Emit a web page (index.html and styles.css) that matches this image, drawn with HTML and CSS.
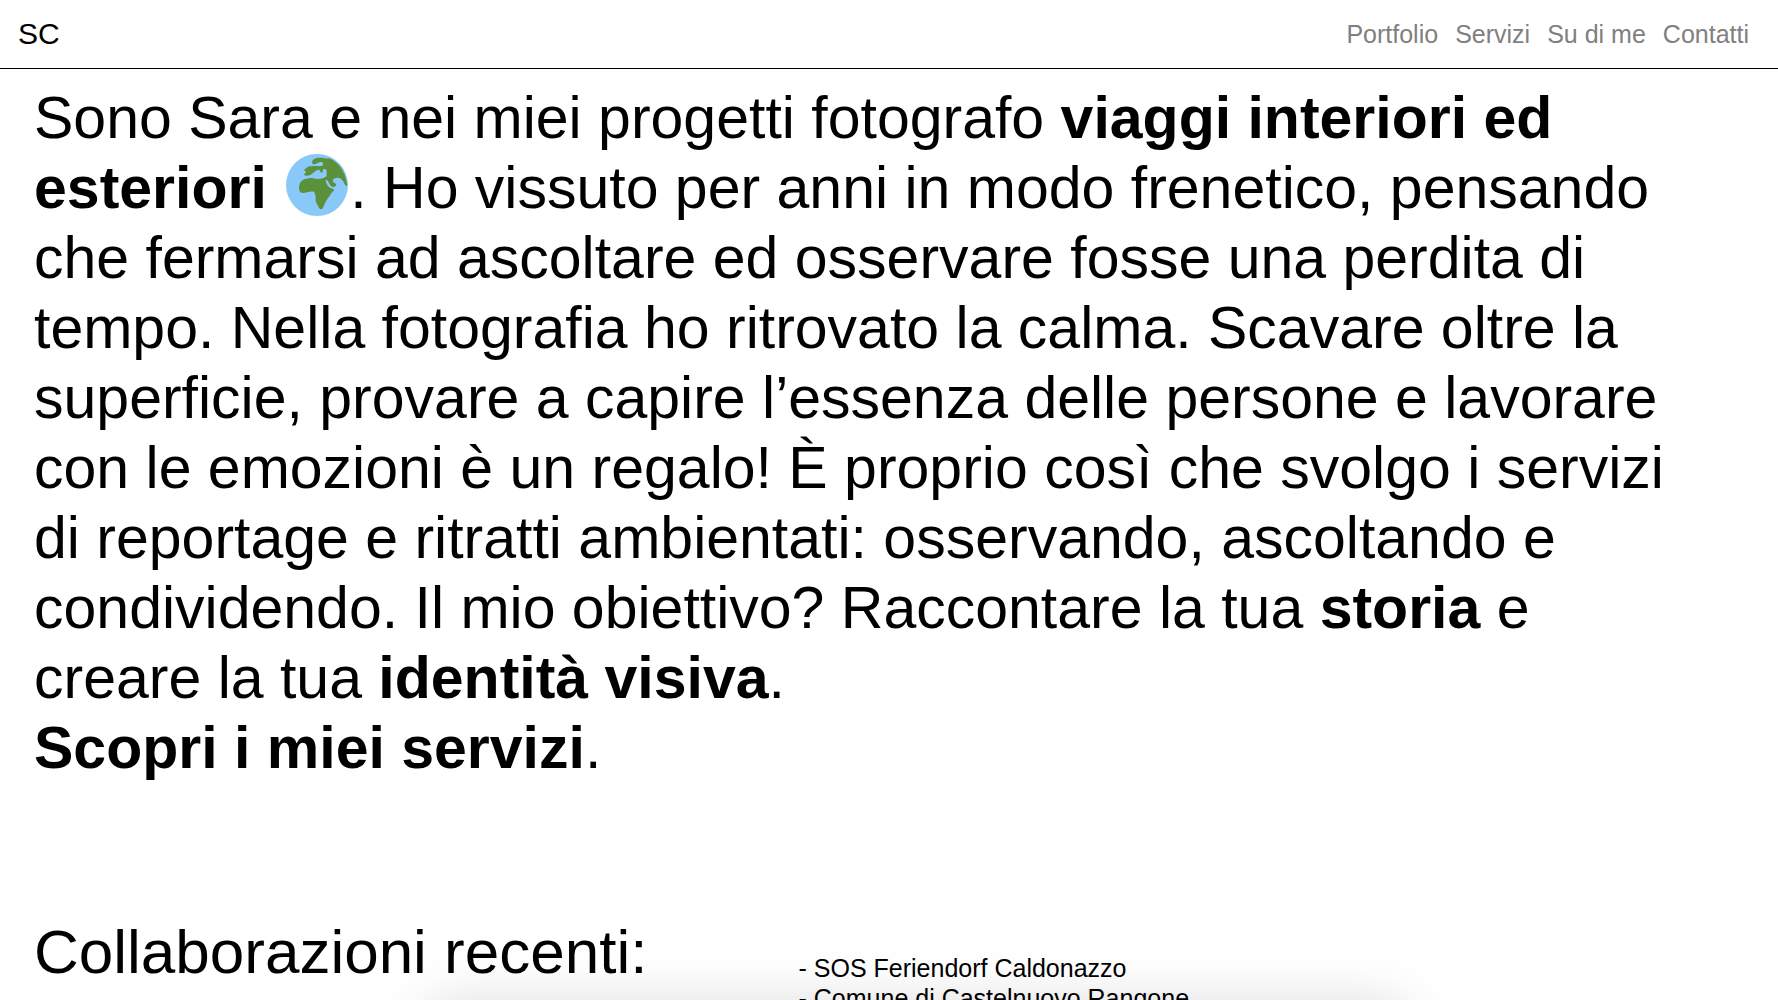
FILE: index.html
```
<!DOCTYPE html>
<html lang="it">
<head>
<meta charset="utf-8">
<title>SC</title>
<link rel="stylesheet" href="styles.css">
</head>
<body>
<header class="navbar">
  <a class="brand" href="#">SC</a>
  <nav class="menu">
    <a href="#portfolio">Portfolio</a>
    <a href="#servizi">Servizi</a>
    <a href="#su-di-me">Su di me</a>
    <a href="#contatti">Contatti</a>
  </nav>
</header>
<main class="content">
  <p class="intro">Sono Sara e nei miei progetti fotografo <b>viaggi interiori ed esteriori</b> <svg class="globe" viewBox="48 36 185 185" aria-hidden="true"><circle cx="140.500" cy="128.500" r="92.500" fill="#88c9f9"/><path fill="#5c913b" d="M126 62C125 54 134 47 146 47C158 46 169 50 177 49C204 60 225 86 231 128C230 133 226 132 222 124C218 112 208 106 201 107C193 108 186 111 188 118C194 124 201 125 197 131C191 136 185 135 180 129C175 120 173 114 167 112C165 120 172 130 179 137L191 141C192 146 184 151 180 158C171 169 163 184 158 197C154 203 149 202 146 196C142 187 136 180 136 171C139 163 134 157 132 149C121 145 111 151 98 152C89 152 87 145 87 136C87 122 96 112 109 110C120 106 130 109 134 110C147 111 159 110 166 105C172 101 168 94 169 88C171 82 165 79 159 82C157 86 159 91 154 92C149 91 151 82 144 83C136 84 130 92 122 98C115 101 108 103 103 99C100 95 107 94 108 89C107 86 102 88 102 84C105 78 110 80 112 75C120 71 130 73 138 72C145 72 151 72 157 70C161 65 158 59 151 60C143 61 138 66 131 67C128 66 126 65 126 62Z"/></svg>. Ho vissuto per anni in modo frenetico, pensando che fermarsi ad ascoltare ed osservare fosse una perdita di tempo. Nella fotografia ho ritrovato la calma. Scavare oltre la superficie, provare a capire l’essenza delle persone e lavorare con le emozioni è un regalo! È proprio così che svolgo i servizi di reportage e ritratti ambientati: osservando, ascoltando e condividendo. Il mio obiettivo? Raccontare la tua <b>storia</b> e creare la tua <b>identità visiva</b>.<br><a class="more" href="#servizi">Scopri i miei servizi</a>.</p>
  <section class="collab">
    <h2>Collaborazioni recenti:</h2>
    <ul>
      <li>- SOS Feriendorf Caldonazzo</li>
      <li>- Comune di Castelnuovo Rangone</li>
    </ul>
  </section>
</main>
<div class="banner-shadow" aria-hidden="true"></div>
</body>
</html>
```

FILE: styles.css
```
* { box-sizing: border-box; }
body { margin: 0; height: 100vh; overflow: hidden; background: #fff; color: #000; font-family: "Liberation Sans", Arial, sans-serif; }
a { color: inherit; text-decoration: none; }
.navbar { display: flex; justify-content: space-between; align-items: center; height: 69px; padding: 0 29px 0 18px; border-bottom: 1px solid #000; }
.brand { font-size: 30px; }
.menu { display: flex; gap: 17px; font-size: 25px; color: #808080; }
.content { padding: 14px 34px 0; }
.intro { margin: 0; font-size: 59px; line-height: 70px; padding-right: 80px; }
.globe { width: 62px; height: 62px; margin: 0 2px 0 3px; vertical-align: -8px; }
.more { font-weight: 700; }
.collab { display: grid; grid-template-columns: 43vw 1fr; margin-top: 130px; }
h2 { margin: 0; font-size: 62px; font-weight: 400; line-height: 78px; }
ul { margin: 0; padding: 40px 0 0; list-style: none; font-size: 25px; line-height: 30px; }
.banner-shadow { position: fixed; left: 24%; right: 21%; bottom: -60px; height: 50px; border-radius: 20px; box-shadow: 0 0 60px rgba(0,0,0,.19); }
```
